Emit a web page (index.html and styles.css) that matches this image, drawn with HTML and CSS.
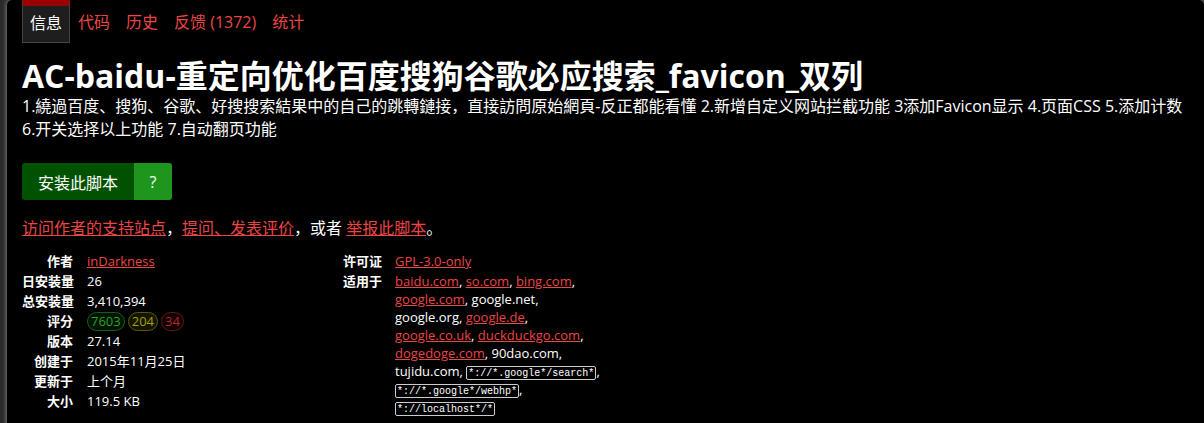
FILE: index.html
```html
<!DOCTYPE html>
<html lang="zh-CN">
<head>
<meta charset="utf-8">
<title>AC-baidu</title>
<link rel="stylesheet" href="styles.css">
</head>
<body>
<div class="page">
  <nav class="tabs">
    <span class="tab active">信息</span>
    <a class="tab" href="#">代码</a>
    <a class="tab" href="#">历史</a>
    <a class="tab" href="#">反馈 (1372)</a>
    <a class="tab" href="#">统计</a>
  </nav>
  <h2 class="title">AC-baidu-重定向优化百度搜狗谷歌必应搜索_favicon_双列</h2>
  <p class="desc">1.繞過百度、搜狗、谷歌、好搜搜索結果中的自己的跳轉鏈接，直接訪問原始網頁-反正都能看懂 2.新增自定义网站拦截功能 3添加Favicon显示 4.页面CSS 5.添加计数 6.开关选择以上功能 7.自动翻页功能</p>
  <div class="install">
    <a class="install-main" href="#">安装此脚本</a><a class="install-help" href="#">?</a>
  </div>
  <p class="links"><a href="#">访问作者的支持站点</a>，<a href="#">提问、发表评价</a>，或者 <a href="#">举报此脚本</a>。</p>
  <div class="meta">
    <dl class="col col-left">
      <dt>作者</dt><dd><a href="#">inDarkness</a></dd>
      <dt>日安装量</dt><dd>26</dd>
      <dt>总安装量</dt><dd>3,410,394</dd>
      <dt>评分</dt><dd><span class="pill good">7603</span><span class="pill ok">204</span><span class="pill bad">34</span></dd>
      <dt>版本</dt><dd>27.14</dd>
      <dt>创建于</dt><dd>2015年11月25日</dd>
      <dt>更新于</dt><dd>上个月</dd>
      <dt>大小</dt><dd>119.5 KB</dd>
    </dl>
    <dl class="col col-right">
      <dt>许可证</dt><dd><a href="#">GPL-3.0-only</a></dd>
      <dt>适用于</dt>
      <dd class="sites"><a href="#">baidu.com</a>, <a href="#">so.com</a>, <a href="#">bing.com</a>, <a href="#">google.com</a>, google.net, google.org, <a href="#">google.de</a>, <a href="#">google.co.uk</a>, <a href="#">duckduckgo.com</a>, <a href="#">dogedoge.com</a>, 90dao.com, tujidu.com, <code>*://*.google*/search*</code>, <code>*://*.google*/webhp*</code>, <code>*://localhost*/*</code></dd>
    </dl>
  </div>
  <div class="next"></div>
</div>
</body>
</html>
```

FILE: styles.css
```css
html, body {
  margin: 0;
  padding: 0;
}
body {
  background: #2a2a2a;
  color: #fff;
  font-family: "Open Sans", "Noto Sans CJK SC", sans-serif;
  height: 423px;
  overflow: hidden;
}
a {
  color: #ec4545;
}
.page {
  margin: 3px 0 0 7px;
  padding: 0 15px;
  background: #000;
  border-radius: 5px 5px 0 0;
  box-shadow: 0 0 5px #999;
  min-height: 430px;
}
.tabs {
  display: flex;
  align-items: stretch;
  height: 43px;
  margin-top: -3px;
  font-size: 16px;
}
.tab {
  display: flex;
  align-items: center;
  padding: 0 8px;
  text-decoration: none;
  color: #ec4545;
  line-height: 1;
}
.tab.active {
  color: #fff;
  background: #1e1e1e;
  border-top: 6px solid #990000;
  border-left: 1px solid #444;
  border-right: 1px solid #444;
  border-bottom: 1px solid #444;
  padding: 0 7px 3px;
}
.title {
  margin: 15px 0 0;
  font-size: 32px;
  line-height: 36px;
  font-weight: bold;
}
.desc {
  margin: 1px 0 0;
  font-size: 16px;
  line-height: 23px;
}
.install {
  display: flex;
  margin-top: 22px;
  height: 37px;
  font-size: 16px;
}
.install a {
  display: flex;
  align-items: center;
  justify-content: center;
  color: #fff;
  text-decoration: none;
}
.install-main {
  width: 112px;
  background: #005200;
  border-radius: 3px 0 0 3px;
}
.install-help {
  width: 38px;
  background: #1e961e;
  border-radius: 0 3px 3px 0;
}
.links {
  margin: 16px 0 0;
  font-size: 16px;
  line-height: 24px;
}
.meta {
  display: flex;
  margin-top: 11px;
  font-size: 13px;
  line-height: 20px;
}
.col {
  display: grid;
  column-gap: 14px;
  margin: 0;
  align-content: start;
}
.col-left {
  width: 321px;
  grid-template-columns: 51px 1fr;
}
.col-right {
  grid-template-columns: 38px 210px;
}
dt {
  font-weight: bold;
  text-align: right;
  white-space: nowrap;
}
dd {
  margin: 0;
}
.sites {
  line-height: 18px;
  padding-top: 1px;
}
.pill {
  display: inline-block;
  padding: 0 3px;
  margin-right: 3px;
  border: 1px solid;
  border-radius: 10px;
  line-height: 17px;
}
.pill.good {
  color: #2e9e2e;
  border-color: #1d5a1d;
  background: #001400;
}
.pill.ok {
  color: #a3a300;
  border-color: #5a5a00;
  background: #141400;
}
.pill.bad {
  color: #b02a2a;
  border-color: #5a1a1a;
  background: #140000;
}
code {
  font-family: "Liberation Mono", monospace;
  font-size: 10px;
  line-height: 13px;
  border: 1px solid #ccc;
  border-radius: 2px;
  padding: 1px 1px 0;
  white-space: nowrap;
}
.next {
  margin-top: 16px;
  width: 16px;
  height: 6px;
  background: #3a0808;
}
```
